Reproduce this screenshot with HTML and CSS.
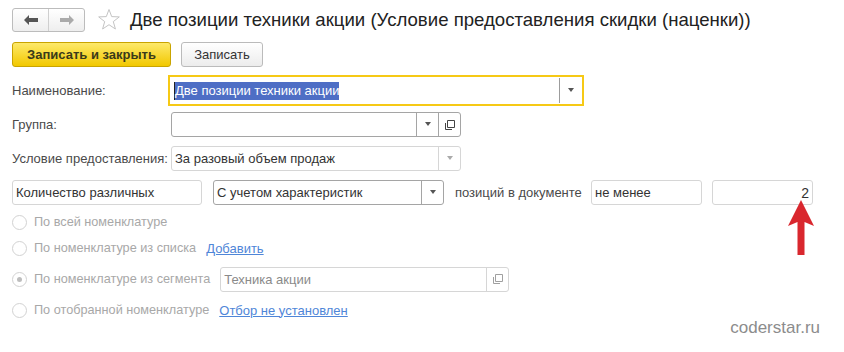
FILE: index.html
```html
<!DOCTYPE html>
<html lang="ru">
<head>
    <meta charset="UTF-8">
    <title>Две позиции техники акции</title>
    <link rel="stylesheet" href="styles.css">
</head>
<body>
    <div class="header">
        <div class="nav">
            <span class="nav-btn">
                <svg width="16" height="12" viewBox="0 0 16 12"><path d="M1 6 L6 1 L6 4 L15 4 L15 8 L6 8 L6 11 Z" fill="#555"/></svg>
            </span>
            <span class="nav-btn">
                <svg width="16" height="12" viewBox="0 0 16 12"><path d="M15 6 L10 1 L10 4 L1 4 L1 8 L10 8 L10 11 Z" fill="#aaa"/></svg>
            </span>
        </div>
        <svg class="star" width="24" height="24" viewBox="0 0 24 24"><path d="M12 1.5 L14.7 8.6 L22.3 8.9 L16.3 13.6 L18.4 21 L12 16.7 L5.6 21 L7.7 13.6 L1.7 8.9 L9.3 8.6 Z" fill="none" stroke="#c4c4c4" stroke-width="1"/></svg>
        <h1>Две позиции техники акции (Условие предоставления скидки (наценки))</h1>
    </div>

    <div class="toolbar">
        <button class="btn btn-main">Записать и закрыть</button>
        <button class="btn">Записать</button>
    </div>

    <div class="form">
        <div class="row row-name">
            <span class="label">Наименование:</span>
            <div class="field field-focus">
                <span class="value"><span class="selected">Две позиции техники акции</span></span>
                <span class="tool"><i class="tri"></i></span>
            </div>
        </div>

        <div class="row row-group">
            <span class="label">Группа:</span>
            <div class="field field-dark field-wide">
                <span class="value"></span>
                <span class="tool"><i class="tri"></i></span>
                <span class="tool"><svg width="10" height="10" viewBox="0 0 10 10"><path d="M0.5 3 V9.5 H7 M2.5 0.5 H9.5 V7.5 H2.5 Z" fill="none" stroke="#444" stroke-width="1"/></svg></span>
            </div>
        </div>

        <div class="row row-cond">
            <span class="label">Условие предоставления:</span>
            <div class="field field-wide">
                <span class="value">За разовый объем продаж</span>
                <span class="tool"><i class="tri tri-light"></i></span>
            </div>
        </div>

        <div class="row row-qty">
            <div class="field f-count"><span class="value">Количество различных</span></div>
            <div class="field field-dark f-char">
                <span class="value">С учетом характеристик</span>
                <span class="tool"><i class="tri"></i></span>
            </div>
            <span class="text">позиций в документе</span>
            <div class="field f-less"><span class="value">не менее</span></div>
            <div class="field f-num"><span class="value num">2</span></div>
        </div>

        <div class="row radio-row r1">
            <span class="radio"></span>
            <span class="radio-text">По всей номенклатуре</span>
        </div>
        <div class="row radio-row r2">
            <span class="radio"></span>
            <span class="radio-text">По номенклатуре из списка</span>
            <a class="link">Добавить</a>
        </div>
        <div class="row radio-row r3">
            <span class="radio radio-on"></span>
            <span class="radio-text">По номенклатуре из сегмента</span>
            <div class="field f-segment">
                <span class="value muted">Техника акции</span>
                <span class="tool"><svg width="10" height="10" viewBox="0 0 10 10"><path d="M0.5 3 V9.5 H7 M2.5 0.5 H9.5 V7.5 H2.5 Z" fill="none" stroke="#a0a0a0" stroke-width="1"/></svg></span>
            </div>
        </div>
        <div class="row radio-row r4">
            <span class="radio"></span>
            <span class="radio-text">По отобранной номенклатуре</span>
            <a class="link link-far">Отбор не установлен</a>
        </div>
    </div>

    <div class="watermark">coderstar.ru</div>

    <svg class="red-arrow" width="28" height="56" viewBox="0 0 28 56"><path d="M14 0 L27 26 L17.5 22 L17.5 55 L10.5 55 L10.5 22 L1 26 Z" fill="#d9272e"/></svg>
</body>
</html>
```

FILE: styles.css
```css
body {
    margin: 0;
    font-family: "Liberation Sans", Arial, sans-serif;
    font-size: 13px;
    color: #333;
    background: #fff;
    position: relative;
    width: 844px;
    height: 352px;
    overflow: hidden;
}
.header {
    display: flex;
    align-items: center;
    padding: 8px 0 0 12px;
    height: 24px;
}
.nav {
    display: flex;
    width: 73px;
    height: 24px;
    box-sizing: border-box;
    border: 1px solid #bcbcbc;
    border-radius: 3px;
    background: linear-gradient(#ffffff, #eeeeee);
}
.nav-btn {
    flex: 1;
    display: flex;
    align-items: center;
    justify-content: center;
}
.nav-btn + .nav-btn {
    border-left: 1px solid #cfcfcf;
}
.star {
    margin-left: 12px;
}
h1 {
    margin: 0 0 0 9px;
    font-size: 18.6px;
    font-weight: normal;
    color: #222;
    white-space: nowrap;
}
.toolbar {
    display: flex;
    gap: 10px;
    padding-left: 12px;
    margin-top: 10px;
}
.btn {
    height: 25px;
    padding: 0;
    font-family: inherit;
    font-size: 13px;
    color: #333;
    border: 1px solid #bbb;
    border-radius: 3px;
    background: linear-gradient(#ffffff, #ececec);
    width: 82px;
}
.btn-main {
    width: 159px;
    font-weight: bold;
    color: #3a3a1a;
    border-color: #c9a400;
    background: linear-gradient(#fde96a, #f2c800);
}
.form {
    padding-left: 12px;
}
.row {
    display: flex;
    align-items: center;
    height: 25px;
}
.label {
    width: 159px;
    color: #4a4a4a;
    white-space: nowrap;
}
.row-name {
    margin-top: 8px;
    height: 31px;
}
.row-name .label {
    width: 156px;
}
.row-group {
    margin-top: 6px;
}
.row-cond {
    margin-top: 9px;
}
.row-qty {
    margin-top: 9px;
}
.field {
    display: flex;
    height: 25px;
    box-sizing: border-box;
    border: 1px solid #d6d6d6;
    border-radius: 3px;
    background: #fff;
}
.field-dark {
    border-color: #a5a5a5;
}
.field-focus {
    width: 416px;
    height: 31px;
    border: 2px solid #f6c915;
    border-radius: 0;
    padding: 1px;
}
.field-wide {
    width: 290px;
}
.value {
    flex: 1;
    display: flex;
    align-items: center;
    padding-left: 3px;
    white-space: nowrap;
    overflow: hidden;
}
.selected {
    background: #4e6ec5;
    color: #fff;
    line-height: 18px;
    border-left: 1px solid #222;
}
.tool {
    width: 21px;
    display: flex;
    align-items: center;
    justify-content: center;
    border-left: 1px solid #a5a5a5;
}
.field-focus .tool {
    border-left-color: #9c9c9c;
}
.field-wide:not(.field-dark) .tool,
.f-segment .tool {
    border-left-color: #d6d6d6;
}
.tri {
    width: 0;
    height: 0;
    border-left: 3.5px solid transparent;
    border-right: 3.5px solid transparent;
    border-top: 4px solid #555;
    margin-top: -2px;
}
.tri-light {
    border-top-color: #aaa;
}
.f-count {
    width: 190px;
}
.f-char {
    width: 231px;
    margin-left: 11px;
}
.text {
    margin-left: 11px;
    width: 136px;
    color: #4a4a4a;
}
.f-less {
    width: 111px;
}
.f-num {
    width: 101px;
    margin-left: 10px;
}
.num {
    justify-content: flex-end;
    padding-right: 3px;
    font-size: 14px;
}
.radio-row {
    height: 24px;
    color: #a8a8a8;
}
.radio-text {
    font-size: 12.7px;
}
.r1 {
    margin-top: 5px;
}
.r2 {
    margin-top: 2px;
}
.r3 {
    margin-top: 7px;
}
.r4 {
    margin-top: 7px;
}
.radio {
    width: 15px;
    height: 15px;
    box-sizing: border-box;
    border: 1px solid #d2d2d2;
    border-radius: 50%;
    margin-right: 7px;
    display: flex;
    align-items: center;
    justify-content: center;
}
.radio-on::after {
    content: "";
    width: 5px;
    height: 5px;
    border-radius: 50%;
    background: #bdbdbd;
}
.link {
    margin-left: 10px;
    color: #4f86d8;
    text-decoration: underline;
}
.link-far {
    margin-left: 10px;
}
.f-segment {
    width: 289px;
    margin-left: 10px;
}
.muted {
    color: #8a8a8a;
}
.watermark {
    position: absolute;
    right: 24px;
    top: 318px;
    font-size: 17px;
    color: #8c8c8c;
}
.red-arrow {
    position: absolute;
    left: 787px;
    top: 200px;
}
```
